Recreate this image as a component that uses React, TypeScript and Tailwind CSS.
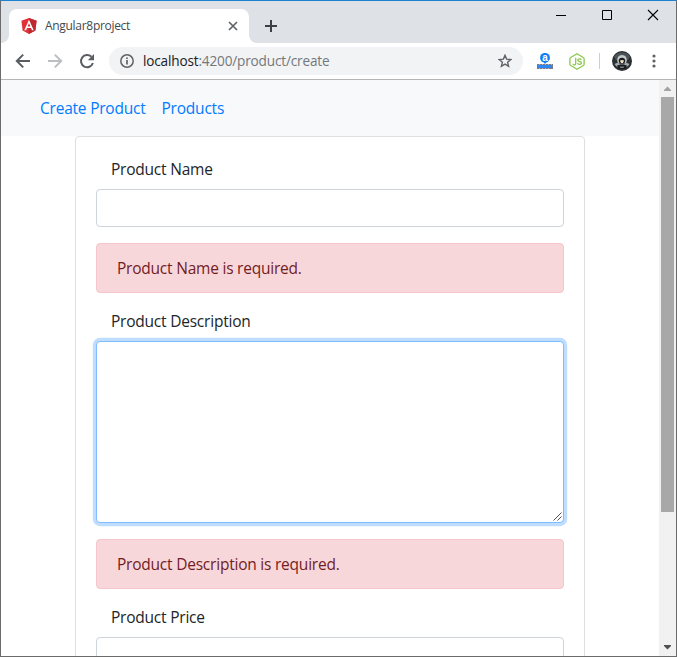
import type { ReactNode } from "react";

function AngularLogo() {
  return (
    <svg className="h-4 w-4 shrink-0" viewBox="0 0 16 16">
      <path d="M8 0 15.6 2.7 14.4 12.5 8 16 1.6 12.5.4 2.7Z" fill="#e03038" />
      <path d="M8 0 15.6 2.7 14.4 12.5 8 16Z" fill="#bd2930" />
      <path d="M8 1.8 3.3 12.2H5.1L6 9.9H10L10.9 12.2H12.7ZM8 5.2 9.4 8.4H6.6Z" fill="#fff" fillRule="evenodd" />
    </svg>
  );
}

function TitleBar() {
  return (
    <div className="flex h-[42px] shrink-0 bg-[#dee1e6] pl-2">
      <div className="relative mt-2 flex h-[34px] w-60 items-center rounded-t-lg bg-white pr-[10px] pl-3">
        <svg className="absolute bottom-0 -left-2 h-2 w-2" viewBox="0 0 8 8">
          <path d="M8 0V8H0A8 8 0 0 0 8 0Z" fill="#fff" />
        </svg>
        <svg className="absolute -right-2 bottom-0 h-2 w-2" viewBox="0 0 8 8">
          <path d="M0 0V8H8A8 8 0 0 1 0 0Z" fill="#fff" />
        </svg>
        <AngularLogo />
        <span className="ml-2 text-[12px] leading-4 tracking-[-0.3px] text-[#45494d]">Angular8project</span>
        <svg className="ml-auto h-3 w-3" viewBox="0 0 12 12" stroke="#5f6368" strokeWidth="1.7">
          <path d="M2 2 10 10M10 2 2 10" />
        </svg>
      </div>
      <svg className="mt-[19px] ml-4 h-3 w-3" viewBox="0 0 12 12" stroke="#3c4043" strokeWidth="2">
        <path d="M6 0V12M0 6H12" />
      </svg>
      <div className="mt-2 mr-[17px] ml-auto flex gap-[34px]">
        <svg className="h-3 w-3" viewBox="0 0 12 12" stroke="#000">
          <path d="M1 6.5H11" />
        </svg>
        <svg className="h-3 w-3" viewBox="0 0 12 12" stroke="#000" fill="none">
          <path d="M1.5 1.5H10.5V10.5H1.5Z" />
        </svg>
        <svg className="h-3 w-3" viewBox="0 0 12 12" stroke="#000" strokeWidth="1.1">
          <path d="M1 1 11 11M11 1 1 11" />
        </svg>
      </div>
    </div>
  );
}

function Toolbar() {
  return (
    <div className="flex h-[37px] shrink-0 items-center border-b border-[#b5b5b6] bg-white pl-[14px]">
      <svg className="h-4 w-4" viewBox="0 0 16 16" fill="none" stroke="#5a5e63" strokeWidth="2">
        <path d="M15 8H2M8.2 1.6 1.8 8 8.2 14.4" />
      </svg>
      <svg className="ml-4 h-4 w-4" viewBox="0 0 16 16" fill="none" stroke="#bcbec1" strokeWidth="2">
        <path d="M1 8H14M7.8 1.6 14.2 8 7.8 14.4" />
      </svg>
      <svg className="ml-4 h-4 w-4" viewBox="0 0 16 16">
        <path d="M13.9 10A6.1 6.1 0 1 1 12.4 3.8" fill="none" stroke="#5a5e63" strokeWidth="2" />
        <path d="M15 1V7.2H8.8Z" fill="#5a5e63" />
      </svg>
      <div className="ml-[14px] flex h-7 w-[414px] items-center rounded-full bg-[#f1f3f4] pr-[11px] pl-[11px]">
        <svg className="h-[14px] w-[14px]" viewBox="0 0 14 14" fill="none" stroke="#5f6368" strokeWidth="1.5">
          <circle cx="7" cy="7" r="6.2" />
          <path d="M7 6V10.5M7 3.4V5" strokeWidth="1.7" />
        </svg>
        <span className="ml-[9px] text-[13.6px] leading-5 tracking-[-0.17px] whitespace-nowrap text-[#74787c]">
          <span className="text-[#202124]">localhost</span>:4200/product/create
        </span>
        <svg className="ml-auto h-[14px] w-[14px]" viewBox="0 0 14 14" fill="none" stroke="#5f6368" strokeWidth="1.4">
          <path d="M7 1.3 8.6 5.1 12.8 5.5 9.6 8.2 10.6 12.3 7 10.1 3.4 12.3 4.4 8.2 1.2 5.5 5.4 5.1Z" />
        </svg>
      </div>
      <svg className="ml-[14px] h-4 w-4" viewBox="0 0 16 16">
        <path d="M6 8H10L8 11Z" fill="#0f7df2" />
        <circle cx="8" cy="4.8" r="4.9" fill="#0f7df2" />
        <text x="8" y="7.7" textAnchor="middle" fontSize="10" fontWeight="700" fill="#fff" fontFamily="Liberation Sans, sans-serif">a</text>
        <path d="M0 11H16V16H0Z" fill="#777d84" />
        <path d="M1 12H14.5V15H1Z" fill="#2f86f0" />
        <path d="M2.5 11V12M5.5 11V12M8.5 11V12M11.5 11V12M14.5 11V12M2.5 15V16M5.5 15V16M8.5 15V16M11.5 15V16" stroke="#b4b9be" />
      </svg>
      <svg className="ml-4 h-[17px] w-4" viewBox="0 0 16 17" fill="none" stroke="#8cc84b" strokeWidth="1.3">
        <path d="M8 .8 14.3 4.5Q15.1 5 15.1 5.8V11.2Q15.1 12 14.3 12.5L8 16.2 1.7 12.5Q.9 12 .9 11.2V5.8Q.9 5 1.7 4.5Z" />
        <path d="M6.7 4.8V10.5Q6.7 12 5.4 12 4.1 12 4 10.8" />
        <path d="M12.3 6.8Q12 5.8 10.4 5.8 8.7 5.8 8.7 7.1 8.7 8.2 10.5 8.5 12.5 8.7 12.5 10 12.5 11.3 10.5 11.3 8.7 11.3 8.5 10.1" />
      </svg>
      <div className="ml-[14px] h-4 w-px bg-[#cdcfd2]" />
      <svg className="ml-3 h-5 w-5" viewBox="0 0 20 20">
        <circle cx="10" cy="10" r="10" fill="#2b3033" />
        <path d="M2 5.5Q5 1.5 10 1.5T18 5.5L16 9H4Z" fill="#4c5457" />
        <path d="M5.2 10Q5 4 10 4T14.8 10L13.5 12.5H6.5Z" fill="#c3c8ca" />
        <path d="M6.7 9.8Q7 6.8 10 6.8T13.3 9.8L12.4 12.5H7.6Z" fill="#17191b" />
        <path d="M8 9.6Q10 8.2 12 9.6L11 12H9Z" fill="#f1e2c4" />
        <path d="M2.5 13 6 11.5 8 13.5H12L14 11.5 17.5 13 15.5 15.5H4.5Z" fill="#a3aaad" />
        <path d="M5 14.5 8 13.8H12L15 14.5 13 18H7Z" fill="#181b1d" />
        <path d="M7.5 15.6H12.5L11.5 17H8.5Z" fill="#777f82" />
      </svg>
      <svg className="ml-5 h-[14px] w-1" viewBox="0 0 4 14" fill="#5f6368">
        <circle cx="2" cy="2" r="1.6" />
        <circle cx="2" cy="7" r="1.6" />
        <circle cx="2" cy="12" r="1.6" />
      </svg>
    </div>
  );
}

function Label({ children }: { children: ReactNode }) {
  return (
    <label className="mb-2 block pl-[15px] text-[15.5px] leading-6 tracking-[-0.22px] text-[#212529]">{children}</label>
  );
}

function Alert({ children }: { children: ReactNode }) {
  return (
    <div className="mb-4 h-[50px] rounded border border-[#f5c6cb] bg-[#f8d7da] px-5 py-3 text-[15.5px] leading-6 tracking-[-0.22px] text-[#721c24]">
      {children}
    </div>
  );
}

function Scrollbar() {
  return (
    <div className="flex w-[17px] shrink-0 flex-col items-center bg-[#f1f1f1]">
      <svg className="h-[17px] w-[17px] shrink-0" viewBox="0 0 17 17">
        <path d="M5 11H12V10L8.5 6.5 5 10Z" fill="#a3a3a3" />
      </svg>
      <div className="h-[415px] w-[13px] bg-[#a8a8a8]" />
      <svg className="mt-auto h-[17px] w-[17px] shrink-0" viewBox="0 0 17 17">
        <path d="M5 6H12V7L8.5 10.5 5 7Z" fill="#505050" />
      </svg>
    </div>
  );
}

export default function App() {
  return (
    <div className="flex h-[657px] w-[677px] flex-col overflow-hidden border border-[#6b6b6b] border-t-[#1b81d1] bg-white font-['Open_Sans','Noto_Sans',sans-serif]">
      <TitleBar />
      <Toolbar />
      <div className="flex min-h-0 flex-1">
        <main className="min-w-0 flex-1 overflow-hidden">
          <nav className="flex h-14 items-center gap-4 bg-[#f8f9fa] pl-[39px] text-[15.5px] leading-6 tracking-[-0.22px] text-[#007bff]">
            <a>Create Product</a>
            <a>Products</a>
          </nav>
          <form className="ml-[74px] h-[600px] w-[510px] rounded border border-[#dfdfdf] px-5 pt-5">
            <Label>Product Name</Label>
            <input className="mb-4 block h-[38px] w-full rounded border border-[#ced4da] bg-white px-3 outline-none" />
            <Alert>Product Name is required.</Alert>
            <Label>Product Description</Label>
            <div className="mb-4 flex h-[182px] items-end justify-end rounded border border-[#80bdff] bg-white shadow-[0_0_0_3.2px_rgba(0,123,255,0.25)]">
              <svg className="mr-px mb-px h-[9px] w-[9px]" viewBox="0 0 9 9" stroke="#555" strokeWidth="1">
                <path d="M.5 8.5 8.5 .5M4.5 8.5 8.5 4.5" />
              </svg>
            </div>
            <Alert>Product Description is required.</Alert>
            <Label>Product Price</Label>
            <input className="block h-[38px] w-full rounded border border-[#ced4da] bg-white px-3 outline-none" />
          </form>
        </main>
        <Scrollbar />
      </div>
    </div>
  );
}
